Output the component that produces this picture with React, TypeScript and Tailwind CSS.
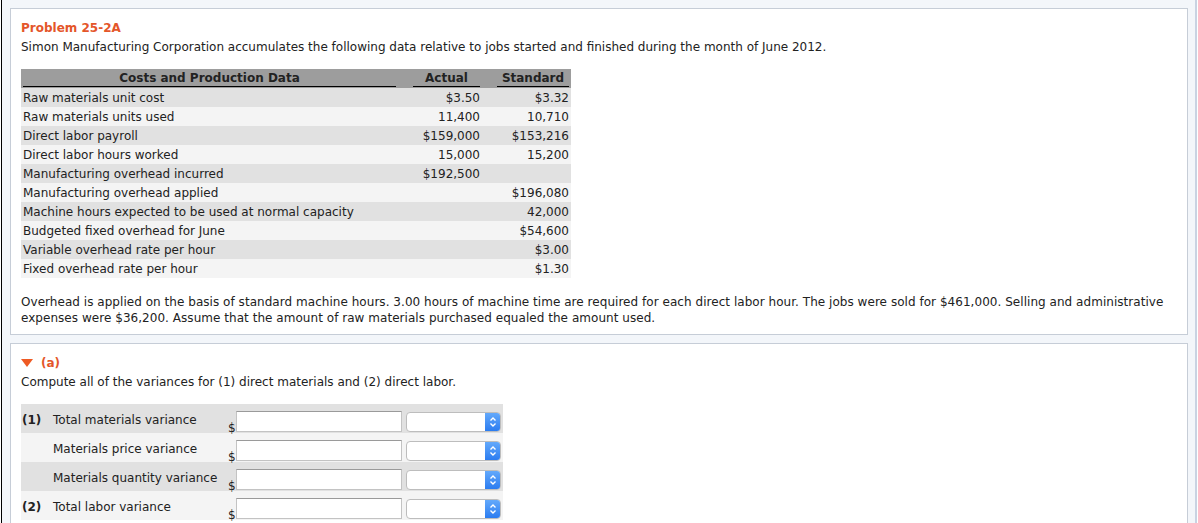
import React from "react";

const rows: [string, string, string][] = [
  ["Raw materials unit cost", "$3.50", "$3.32"],
  ["Raw materials units used", "11,400", "10,710"],
  ["Direct labor payroll", "$159,000", "$153,216"],
  ["Direct labor hours worked", "15,000", "15,200"],
  ["Manufacturing overhead incurred", "$192,500", ""],
  ["Manufacturing overhead applied", "", "$196,080"],
  ["Machine hours expected to be used at normal capacity", "", "42,000"],
  ["Budgeted fixed overhead for June", "", "$54,600"],
  ["Variable overhead rate per hour", "", "$3.00"],
  ["Fixed overhead rate per hour", "", "$1.30"],
];

const answers: [string, string][] = [
  ["(1)", "Total materials variance"],
  ["", "Materials price variance"],
  ["", "Materials quantity variance"],
  ["(2)", "Total labor variance"],
];

function SelectBox() {
  return (
    <div className="mt-[8px] flex h-[20px] w-[95px] overflow-hidden rounded-[4px] border border-[#bdbdbd] bg-white">
      <div className="flex-1" />
      <div className="flex w-[15px] items-center justify-center bg-gradient-to-b from-[#63a9fb] to-[#2b7cf0]">
        <svg width="8" height="12" viewBox="0 0 8 12">
          <path d="M1.5 4.5 L4 2 L6.5 4.5" fill="none" stroke="white" strokeWidth="1.4" />
          <path d="M1.5 7.5 L4 10 L6.5 7.5" fill="none" stroke="white" strokeWidth="1.4" />
        </svg>
      </div>
    </div>
  );
}

export default function App() {
  return (
    <div className="h-[523px] w-[1198px] overflow-hidden bg-white font-['DejaVu_Sans',sans-serif] text-[12px] leading-4 text-[#222]">
      <div className="ml-px h-full w-[1196px] border-l border-r-2 border-l-black border-r-[#c9d3e2] bg-[#f3f6fa] pl-2 pr-[7px] pt-2">
        <div className="border border-[#c6cdd7] bg-white px-[10px] pb-[8px] pt-[11px]">
          <div className="font-bold text-[#e4562a]">Problem 25-2A</div>
          <div className="mt-[3px]">
            Simon Manufacturing Corporation accumulates the following data relative to jobs started and finished during the month of June 2012.
          </div>

          <div className="mt-[14px] w-[550px]">
            <div className="grid h-[19px] grid-cols-[373px_67px_72px] gap-x-[17px] bg-[#9d9d9d] px-[2px] font-bold">
              <div className="h-[18px] border-b border-black pt-px text-center leading-[17px]">Costs and Production Data</div>
              <div className="h-[18px] border-b border-black pt-px text-center leading-[17px]">Actual</div>
              <div className="h-[18px] border-b border-black pt-px text-center leading-[17px]">Standard</div>
            </div>
            {rows.map(([label, actual, standard], i) => (
              <div
                key={label}
                className={`grid h-[19px] grid-cols-[373px_67px_72px] gap-x-[17px] px-[2px] pt-[2px] leading-[17px] ${
                  i % 2 === 0 ? "bg-[#e1e1e1]" : "bg-[#f4f4f4]"
                }`}
              >
                <div>{label}</div>
                <div className="text-right">{actual}</div>
                <div className="text-right">{standard}</div>
              </div>
            ))}
          </div>

          <p className="mt-[16px] tracking-[0.04px]">
            Overhead is applied on the basis of standard machine hours. 3.00 hours of machine time are required for each direct labor hour. The jobs were sold for $461,000. Selling and administrative expenses were $36,200. Assume that the amount of raw materials purchased equaled the amount used.
          </p>
        </div>

        <div className="mt-2 h-[300px] border border-[#c6cdd7] bg-white px-[10px] pt-[11px]">
          <div className="flex items-center gap-2 font-bold text-[#e4562a]">
            <svg width="12" height="8" viewBox="0 0 12 8">
              <path d="M0 0 H12 L6 8 Z" fill="#ee5a24" />
            </svg>
            <span>(a)</span>
          </div>
          <div className="mt-[3px]">Compute all of the variances for (1) direct materials and (2) direct labor.</div>

          <div className="mt-[14px] w-[482px]">
            {answers.map(([num, label], i) => (
              <div
                key={label}
                className={`flex h-[29px] items-start ${i % 2 === 0 ? "bg-[#e1e1e1]" : "bg-[#f4f4f4]"}`}
              >
                <div className="w-[32px] pl-px pt-[8px] font-bold">{num}</div>
                <div className="w-[175px] pt-[8px]">{label}</div>
                <div className="w-[8px] pt-[16px]">$</div>
                <div className="mt-[7px] h-[21px] w-[166px] border border-[#c3c3c3] border-t-[#9a9a9a] bg-white" />
                <div className="w-[4px]" />
                <SelectBox />
              </div>
            ))}
          </div>
        </div>
      </div>
    </div>
  );
}
